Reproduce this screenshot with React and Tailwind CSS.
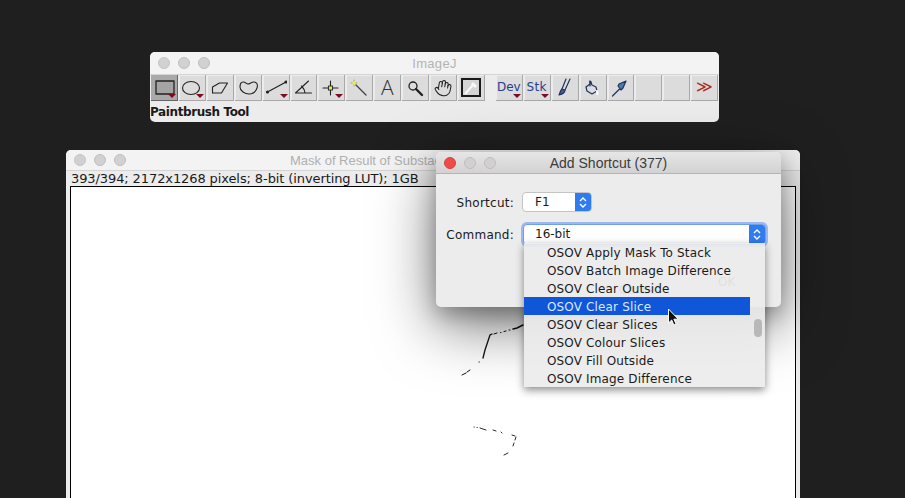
import React from "react";
import { Hand } from "lucide-react";

const Lights = ({ red }) => (
  <div className="flex gap-[8px]">
    <span className={`w-[12px] h-[12px] rounded-full ${red ? "bg-[#ee4b48] border border-[#d8403c]" : "bg-[#d2d0d0] border border-[#c6c4c4]"}`} />
    <span className="w-[12px] h-[12px] rounded-full bg-[#d2d0d0] border border-[#c0bebe]" />
    <span className="w-[12px] h-[12px] rounded-full bg-[#d2d0d0] border border-[#c0bebe]" />
  </div>
);

const Tri = () => (
  <span className="absolute right-[1px] bottom-[2px] w-0 h-0 border-l-[4px] border-r-[4px] border-t-[4px] border-l-transparent border-r-transparent border-t-[#7c0a20]" />
);

const Btn = ({ children, tri, active, className = "" }) => (
  <div className={`relative w-[27px] h-[26px] mr-[1px] flex items-center justify-center border-r border-b ${active ? "bg-[#a9a9a9] border-[#666]" : "bg-[#dcdcdd] border-[#a8a8a8] shadow-[inset_1px_1px_0_#ececec]"} ${className}`}>
    {children}
    {tri && <Tri />}
  </div>
);

const Ico = ({ children, s = "#222", w = 1.1 }) => (
  <svg width="22" height="20" viewBox="0 0 22 20" fill="none" stroke={s} strokeWidth={w} strokeLinecap="round" strokeLinejoin="round">{children}</svg>
);

const Chev = () => (
  <svg width="8" height="13" viewBox="0 0 8 13" fill="none" stroke="#fff" strokeWidth="1.4">
    <path d="M1 5l3-3 3 3M1 8l3 3 3-3" />
  </svg>
);

const rows = ["OSOV Apply Mask To Stack", "OSOV Batch Image Difference", "OSOV Clear Outside", "OSOV Clear Slice", "OSOV Clear Slices", "OSOV Colour Slices", "OSOV Fill Outside", "OSOV Image Difference"];

export default function App() {
  const ui = { fontFamily: '"DejaVu Sans", sans-serif' };
  return (
    <div className="relative w-[905px] h-[498px] overflow-hidden bg-[#1f1f1f]" style={ui}>
      {/* ImageJ toolbar */}
      <div className="absolute left-[150px] top-[52px] w-[569px] h-[70px] rounded-[5px] overflow-hidden bg-[#ececec] flex flex-col">
        <div className="relative h-[23px] flex items-center pl-[8px] bg-[#f3f3f3] border-b border-[#d4d4d4]">
          <Lights />
          <span className="absolute inset-x-0 mt-[1px] text-center text-[13px] tracking-[0.3px] text-[#b4b4b4] font-['Liberation_Sans',sans-serif]">ImageJ</span>
        </div>
        <div className="flex pl-[1px] h-[26px]">
          <Btn active tri><Ico w={1.3}><rect x="3" y="3" width="18" height="13" fill="#a4a4a4" stroke="#222" /></Ico></Btn>
          <Btn tri><Ico><ellipse cx="10" cy="10" rx="8.5" ry="6.5" /></Ico></Btn>
          <Btn><Ico><path d="M10.5 5h8l-6 10h-9V9z" /></Ico></Btn>
          <Btn><Ico><path d="M6 4c3 0 3 2 5 2s3-2 6-2 4 3 3 6-4 6-8 6-9-3-9-7c0-3 1-5 3-5z" /></Ico></Btn>
          <Btn tri><Ico w={1.2}><path d="M2.5 14L21 4" /><circle cx="2.5" cy="14" r="1" fill="#222" /><circle cx="21" cy="4" r="1" fill="#222" /></Ico></Btn>
          <Btn><Ico><path d="M3.5 15L16.5 3M3.5 15h16M9.5 8c2 2 3.5 4 3.5 7" /></Ico></Btn>
          <Btn tri><Ico><path d="M3 10h15M10.5 3v14" /><rect x="8.5" y="8" width="4" height="4" fill="#e8ee5a" stroke="#333" /></Ico></Btn>
          <Btn><Ico w={1.4}><path d="M8 7l10 10" stroke="#444" /><path d="M6 2v6M3 5h6" stroke="#a9a968" strokeWidth="1" /><rect x="4.5" y="3.5" width="3" height="3" fill="#e8ee5a" stroke="none" /></Ico></Btn>
          <Btn><span className="text-[21px] leading-none font-light text-[#333] font-['Open_Sans',sans-serif]">A</span></Btn>
          <Btn><Ico w={1.3}><circle cx="9" cy="8" r="4" /><path d="M12 11l6 6" strokeWidth="2.4" /></Ico></Btn>
          <Btn><Hand size={18} strokeWidth={1.4} color="#222" className="rotate-[10deg]" /></Btn>
          <Btn className="mr-[11px]">
            <div className="w-[20px] h-[19px] bg-[#d4d4d4] border-2 border-[#1a1a1a] flex items-center justify-center">
              <svg width="16" height="15" viewBox="0 0 16 15" fill="none" stroke="#f8f8f8" strokeWidth="2"><path d="M2 14L10 5" /><path d="M9 3l4 4" strokeWidth="3" /></svg>
            </div>
          </Btn>
          <Btn tri><span className="text-[12px] text-[#1f3f8f] -mt-[2px]">Dev</span></Btn>
          <Btn tri><span className="text-[12px] tracking-[0.4px] text-[#1f3f8f] -mt-[2px]">Stk</span></Btn>
          <Btn><Ico s="#1e3560" w={1.2}><path d="M12 1L8 11M16 1l-5 11" /><path d="M8 11l3 1c0 3-2 4-6 5 1-2 1-4 3-6z" fill="#4a5e8a" /></Ico></Btn>
          <Btn><Ico s="#1e3560" w={1.2}><path d="M8 3c2 0 1 3 2 4l4 2 1 4-5 3-5-3-1-4 4-3z" /><path d="M8 3v5" /><path d="M15 13l.5 3" stroke="#fff" strokeWidth="2" /></Ico></Btn>
          <Btn><Ico s="#1e3560" w={1.2}><path d="M3.5 18l7-7" /><path d="M9 8l3 4 2-2 3-7-7 3z" fill="#4a7aa8" /></Ico></Btn>
          <Btn />
          <Btn />
          <Btn><span className="text-[16px] leading-none text-[#b02a2a] -mt-[2px]" style={{ fontFamily: '"Liberation Sans", sans-serif' }}>≫</span></Btn>
        </div>
        <div className="h-[21px] pt-[1px] flex items-center text-[12px] font-semibold tracking-[-0.4px] text-[#1a1a1a]">Paintbrush Tool</div>
      </div>

      {/* Image window */}
      <div className="absolute left-[66px] top-[150px] w-[734px] h-[348px] rounded-t-[5px] overflow-hidden bg-[#ececec] flex flex-col">
        <div className="relative shrink-0 h-[21px] flex items-center pl-[8px] bg-[#f3f3f3] border-b border-[#d4d4d4]">
          <Lights />
          <span className="absolute left-[224px] mt-[1px] text-[13px] text-[#b0b0b0] whitespace-nowrap font-['Liberation_Sans',sans-serif]">Mask of Result of Substack</span>
        </div>
        <div className="shrink-0 h-[15px] flex items-center pl-[5px] text-[13px] tracking-[-0.1px] leading-none text-[#1a1a1a] whitespace-nowrap">393/394; 2172x1268 pixels; 8-bit (inverting LUT); 1GB</div>
        <div className="relative flex-1 mx-[4px] bg-white border border-black border-b-0">
          <svg className="absolute left-[380px] top-[130px]" width="90" height="140" viewBox="451 317 90 140" fill="none" stroke="#111" strokeLinecap="round">
            <path d="M523 325l-6 3-4 1" strokeWidth="1.4" />
            <path d="M510 330h-1M506 331l-2 .5M501 332.5h-.5M497 333l-3 1" strokeWidth="1" />
            <path d="M492 334l-2 1-2 6-3 9-2 8" strokeWidth="1.3" />
            <path d="M479 362h.3M470 370l-3 2M466 373l-4 2" strokeWidth="1" />
            <path d="M474 427h.3M477 427.5h.3M480 428l6 2M493 430l3 1M501 432l1 1M512 435l3 1M516 437l-1 3M514 443l-1 3M508 453l-4 2" strokeWidth="0.9" />
          </svg>
        </div>
      </div>

      {/* Dialog */}
      <div className="absolute left-[436px] top-[152px] w-[345px] h-[155px] rounded-[5px] bg-[#ececec] flex flex-col shadow-[0_18px_60px_rgba(0,0,0,0.55),0_8px_20px_rgba(0,0,0,0.25)]">
        <div className="relative shrink-0 h-[22px] flex items-center pl-[8px] rounded-t-[5px] bg-gradient-to-b from-[#e6e6e6] to-[#d2d2d2] border-b border-[#b4b4b4]">
          <Lights red />
          <span className="absolute inset-x-0 mt-[1px] text-center text-[14px] text-[#3c3c3c] font-['Liberation_Sans',sans-serif]">Add Shortcut (377)</span>
        </div>
        <div className="flex items-center mt-[18px] h-[20px]">
          <span className="w-[78px] text-right text-[12px] tracking-[0.25px] pt-[1px] text-[#1a1a1a]">Shortcut:</span>
          <div className="ml-[8px] w-[70px] h-[20px] rounded-[4px] bg-white border border-[#c4c4c4] flex items-center overflow-hidden">
            <span className="flex-1 pl-[12px] text-[12px] text-[#1a1a1a]">F1</span>
            <span className="w-[16px] h-full bg-[#2f7bf0] flex items-center justify-center"><Chev /></span>
          </div>
        </div>
        <div className="flex items-center mt-[12px] h-[20px]">
          <span className="w-[78px] text-right text-[12px] tracking-[0.25px] pt-[1px] text-[#1a1a1a]">Command:</span>
          <div className="ml-[9px] w-[243px] h-[21px] rounded-[4px] bg-white border border-[#6f9fe6] shadow-[0_0_0_2px_rgba(100,150,235,0.6)] flex items-center overflow-hidden">
            <span className="flex-1 pl-[11px] text-[12px] text-[#1a1a1a]">16-bit</span>
            <span className="w-[16px] h-full bg-[#2f7bf0] flex items-center justify-center"><Chev /></span>
          </div>
        </div>
        <span className="absolute left-[183px] top-[129px] text-[12px] text-[#555]">Cancel</span>
        <span className="absolute left-[282px] top-[121px] text-[12px] text-[#555]">OK</span>
      </div>

      {/* Combo list */}
      <div className="absolute left-[524px] top-[243px] w-[241px] h-[144px] flex bg-[#ececec]/92 shadow-[0_3px_8px_rgba(0,0,0,0.45)]">
        <div className="w-[226px] flex flex-col">
          {rows.map((r, i) => (
            <div key={r} className={`h-[18px] flex items-center pl-[23px] pt-[1px] text-[12px] tracking-[0.15px] whitespace-nowrap ${i === 3 ? "bg-[#0f56d8] text-[#dbe8ff]" : "text-[#1a1a1a]"}`}>{r}</div>
          ))}
        </div>
        <div className="flex-1 relative">
          <span className="absolute left-[4px] top-[76px] w-[8px] h-[18px] rounded-full bg-[#b8b8b8]" />
        </div>
      </div>

      {/* Cursor */}
      <svg className="absolute left-[667px] top-[308px]" width="13" height="19" viewBox="0 0 13 19">
        <path d="M1.5 1v14l3.2-3 2.2 5 2.2-1-2.2-4.800h4.400z" fill="#111" stroke="#fff" strokeWidth="1" />
      </svg>
    </div>
  );
}
